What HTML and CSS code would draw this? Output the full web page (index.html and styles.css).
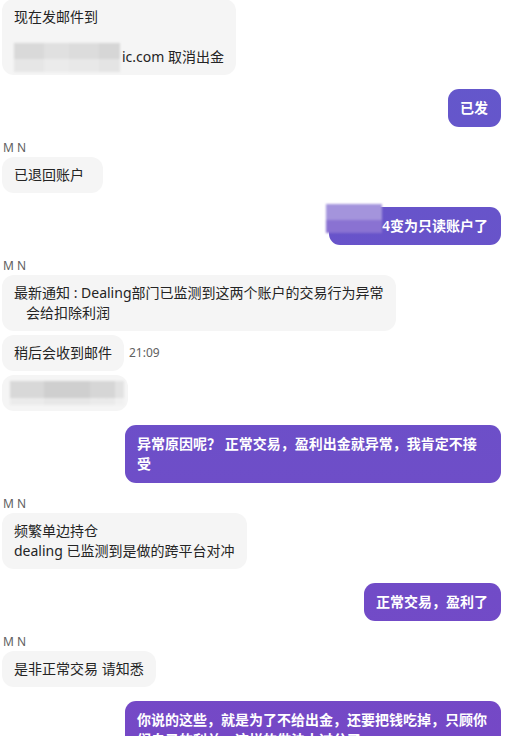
FILE: index.html
```html
<!DOCTYPE html>
<html lang="zh-CN">
<head>
  <meta charset="UTF-8">
  <title>聊天记录</title>
  <link rel="stylesheet" href="styles.css">
</head>
<body>
  <div class="chat">

    <div class="group in">
      <div class="bubble">现在发邮件到<br><br><span class="blur blur-mail"></span>ic.com 取消出金</div>
    </div>

    <div class="group out">
      <div class="bubble">已发</div>
    </div>

    <div class="group in">
      <div class="sender">M N</div>
      <div class="bubble">已退回账户&nbsp;&nbsp;</div>
    </div>

    <div class="group out">
      <div class="bubble"><span class="blur blur-account"></span>4变为只读账户了</div>
    </div>

    <div class="group in">
      <div class="sender">M N</div>
      <div class="bubble">最新通知 : Dealing部门已监测到这两个账户的交易行为异常<br><span class="indent">会给扣除利润</span></div>
      <div class="row">
        <div class="bubble">稍后会收到邮件</div>
        <span class="time">21:09</span>
      </div>
      <div class="bubble bubble-img"><span class="blur blur-pic"></span></div>
    </div>

    <div class="group out">
      <div class="bubble">异常原因呢？ 正常交易，盈利出金就异常，我肯定不接受</div>
    </div>

    <div class="group in">
      <div class="sender">M N</div>
      <div class="bubble">频繁单边持仓<br>dealing 已监测到是做的跨平台对冲</div>
    </div>

    <div class="group out">
      <div class="bubble">正常交易，盈利了</div>
    </div>

    <div class="group in">
      <div class="sender">M N</div>
      <div class="bubble">是非正常交易 请知悉</div>
    </div>

    <div class="group out">
      <div class="bubble">你说的这些，就是为了不给出金，还要把钱吃掉，只顾你们自己的利益，这样的做法太过分了</div>
    </div>

  </div>
</body>
</html>
```

FILE: styles.css
```css
* {
    margin: 0;
    padding: 0;
    box-sizing: border-box;
}

body {
    background: #fff;
    font-family: "Noto Sans", "Noto Sans CJK SC", sans-serif;
    font-size: 14px;
    line-height: 20px;
    color: #242424;
}

/* Chat list */
.chat {
    display: flex;
    flex-direction: column;
    gap: 14px;
    padding: 0 12px 0 2px;
    margin-top: -1px;
}

.group {
    display: flex;
    flex-direction: column;
    gap: 4px;
}

.group.in {
    align-items: flex-start;
}

.group.out {
    align-items: flex-end;
}

.sender {
    font-size: 12px;
    line-height: 14px;
    color: #616161;
    padding-left: 1px;
    margin-bottom: -2px;
}

.bubble {
    padding: 8px 12px;
    border-radius: 12px;
    background: #f5f5f5;
    max-width: 400px;
}

.out .bubble {
    padding: 9px 13px 9px 12px;
    max-width: 376px;
    color: #fff;
    font-weight: 600;
    border-radius: 11px;
    background: linear-gradient(180deg, #6259cc 0%, #6a51c9 45%, #7548c6 100%) fixed;
}

.indent {
    padding-left: 12px;
}

.row {
    display: flex;
    align-items: center;
    gap: 5px;
}

.time {
    font-size: 12px;
    color: #616161;
}

/* blurred bits of the screenshot */
.blur {
    display: inline-block;
    vertical-align: top;
    filter: blur(1px);
}

.blur-mail {
    width: 106px;
    height: 29px;
    margin: -4px 2px -10px 0;
    background:
        linear-gradient(180deg, rgba(255,255,255,0) 0 55%, rgba(255,255,255,0.35) 55% 100%),
        linear-gradient(90deg, #d9d9d9 0 28%, #e0e0e0 28% 52%, #dcdcdc 52% 80%, #d6d6d6 80% 100%);
}

.blur-account {
    width: 56px;
    height: 29px;
    margin: -12px 0 -9px -15px;
    background:
        linear-gradient(180deg, #a494dc 0 55%, #8a72d2 55% 100%);
}

.bubble-img {
    padding: 6px 4px 6px 8px;
}

.blur-pic {
    width: 114px;
    height: 24px;
    background:
        linear-gradient(180deg, rgba(255,255,255,0) 0 72%, rgba(255,255,255,0.5) 72% 100%),
        linear-gradient(90deg, #d8d8d8 0 30%, #cfcfcf 30% 70%, #d6d6d6 70% 92%, #e2e2e2 92% 100%);
}
```
